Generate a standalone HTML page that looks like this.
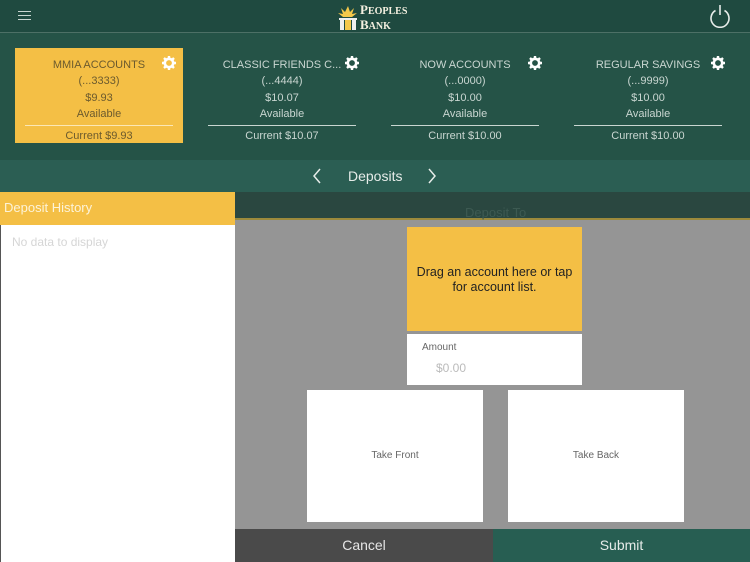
<!DOCTYPE html>
<html><head><style>
*{margin:0;padding:0;box-sizing:border-box}
body{width:750px;height:562px;overflow:hidden;font-family:"Liberation Sans",sans-serif;background:#959595;position:relative}
.a{position:absolute}
.card{position:absolute;top:48px;width:168px;height:95px;text-align:center;color:#c9d6d1;font-size:11px}
.card div{line-height:16.3px}
.card .t{margin-top:9px}
.card hr{border:0;border-top:1px solid #c9d6d1;margin:3px 10px 2px}
.card.sel{background:#f4bf45;color:#6b5a2e}
.card.sel hr{border-top-color:#fbe7b5}
</style></head><body>
<div class="a" style="left:0;top:0;width:750px;height:32px;background:#1f4a40"></div>
<div class="a" style="left:0;top:32px;width:750px;height:1px;background:#4d7066"></div>
<div class="a" style="left:18px;top:11px;width:13px;height:1px;background:#c9d6d1;box-shadow:0 4px 0 #c9d6d1,0 8px 0 #c9d6d1"></div>
<svg class="a" style="left:338px;top:4px" width="20" height="26" viewBox="0 0 20 26"><g fill="#f4c84a"><path d="M10 2l2 6 4-4-2 6 5-1-5 4H5l-5-4 5 1-2-6 4 4z"/></g><rect x="1" y="14" width="18" height="2" fill="#eee"/><rect x="2" y="16" width="4" height="10" fill="#eee"/><rect x="14" y="16" width="4" height="10" fill="#eee"/><rect x="7" y="16" width="6" height="10" fill="#f4c84a"/></svg>
<div class="a" style="left:360px;top:3px;font-family:'Liberation Serif',serif;font-weight:bold;color:#f4f0e0;font-size:13px;line-height:13px">P<span style="font-size:10px">EOPLES</span><br>B<span style="font-size:10px">ANK</span></div>
<svg class="a" style="left:708px;top:4px" width="24" height="24" viewBox="0 0 24 24" fill="none" stroke="#e6ece9" stroke-width="1.6"><path d="M7.5 6.5A9 9 0 1 0 16.5 6.5"/><path d="M12 1v10"/></svg>
<div class="a" style="left:0;top:33px;width:750px;height:127px;background:#255347"></div>
<div class="card sel" style="left:15px"><div class="t">MMIA ACCOUNTS</div><div>(...3333)</div><div>$9.93</div><div>Available</div><hr><div>Current $9.93</div></div>
<div class="card" style="left:198px"><div class="t">CLASSIC FRIENDS C...</div><div>(...4444)</div><div>$10.07</div><div>Available</div><hr><div>Current $10.07</div></div>
<div class="card" style="left:381px"><div class="t">NOW ACCOUNTS</div><div>(...0000)</div><div>$10.00</div><div>Available</div><hr><div>Current $10.00</div></div>
<div class="card" style="left:564px"><div class="t">REGULAR SAVINGS</div><div>(...9999)</div><div>$10.00</div><div>Available</div><hr><div>Current $10.00</div></div>
<svg class="a" style="left:162px;top:56px" width="14" height="14" viewBox="0 0 14 14"><g id="g"><circle cx="7" cy="7" r="4.2" fill="none" stroke="#fff" stroke-width="2.6"/><g stroke="#fff" stroke-width="2.4"><path d="M7 0v3M7 11v3M0 7h3M11 7h3M2 2l2 2M10 10l2 2M12 2l-2 2M2 12l2-2"/></g></g></svg>
<svg class="a" style="left:345px;top:56px" width="14" height="14" viewBox="0 0 14 14"><use href="#g"/></svg>
<svg class="a" style="left:528px;top:56px" width="14" height="14" viewBox="0 0 14 14"><use href="#g"/></svg>
<svg class="a" style="left:711px;top:56px" width="14" height="14" viewBox="0 0 14 14"><use href="#g"/></svg>
<div class="a" style="left:0;top:160px;width:750px;height:32px;background:#2b5e53"></div>
<svg class="a" style="left:312px;top:168px" width="10" height="16"><path d="M8 1L2 8l6 7" fill="none" stroke="#e6ece9" stroke-width="1.5"/></svg>
<div class="a" style="left:348px;top:168px;color:#e6ece9;font-size:14px">Deposits</div>
<svg class="a" style="left:427px;top:168px" width="10" height="16"><path d="M2 1l6 7-6 7" fill="none" stroke="#e6ece9" stroke-width="1.5"/></svg>
<div class="a" style="left:235px;top:192px;width:515px;height:27px;background:#2a4740"></div>
<div class="a" style="left:235px;top:218px;width:515px;height:2px;background:#9c8a3c"></div>
<div class="a" style="left:465px;top:205px;color:#3d5a52;font-size:13px">Deposit To</div>
<div class="a" style="left:0;top:192px;width:235px;height:370px;background:#fff;border-left:1px solid #555"></div>
<div class="a" style="left:0;top:192px;width:235px;height:33px;background:#f4bf45;color:#fdf3d8;font-size:13px;padding:8px 4px">Deposit History</div>
<div class="a" style="left:12px;top:235px;color:#d6d6d6;font-size:12px">No data to display</div>
<div class="a" style="left:407px;top:227px;width:175px;height:104px;background:#f4bf45;color:#222;font-size:12.5px;text-align:center;padding-top:38px;line-height:15px">Drag an account here or tap<br>for account list.</div>
<div class="a" style="left:407px;top:334px;width:175px;height:51px;background:#fff"></div>
<div class="a" style="left:422px;top:342px;color:#666;font-size:10px">Amount</div>
<div class="a" style="left:436px;top:361px;color:#bbb;font-size:12px">$0.00</div>
<div class="a" style="left:307px;top:390px;width:176px;height:132px;background:#fff;color:#666;font-size:10px;text-align:center;padding-top:60px">Take Front</div>
<div class="a" style="left:508px;top:390px;width:176px;height:132px;background:#fff;color:#666;font-size:10px;text-align:center;padding-top:60px">Take Back</div>
<div class="a" style="left:235px;top:529px;width:258px;height:33px;background:#4a4a4a;color:#e6e6e6;font-size:14px;text-align:center;padding-top:8px">Cancel</div>
<div class="a" style="left:493px;top:529px;width:257px;height:33px;background:#275e52;color:#e6ece9;font-size:14px;text-align:center;padding-top:8px">Submit</div>
</body></html>
